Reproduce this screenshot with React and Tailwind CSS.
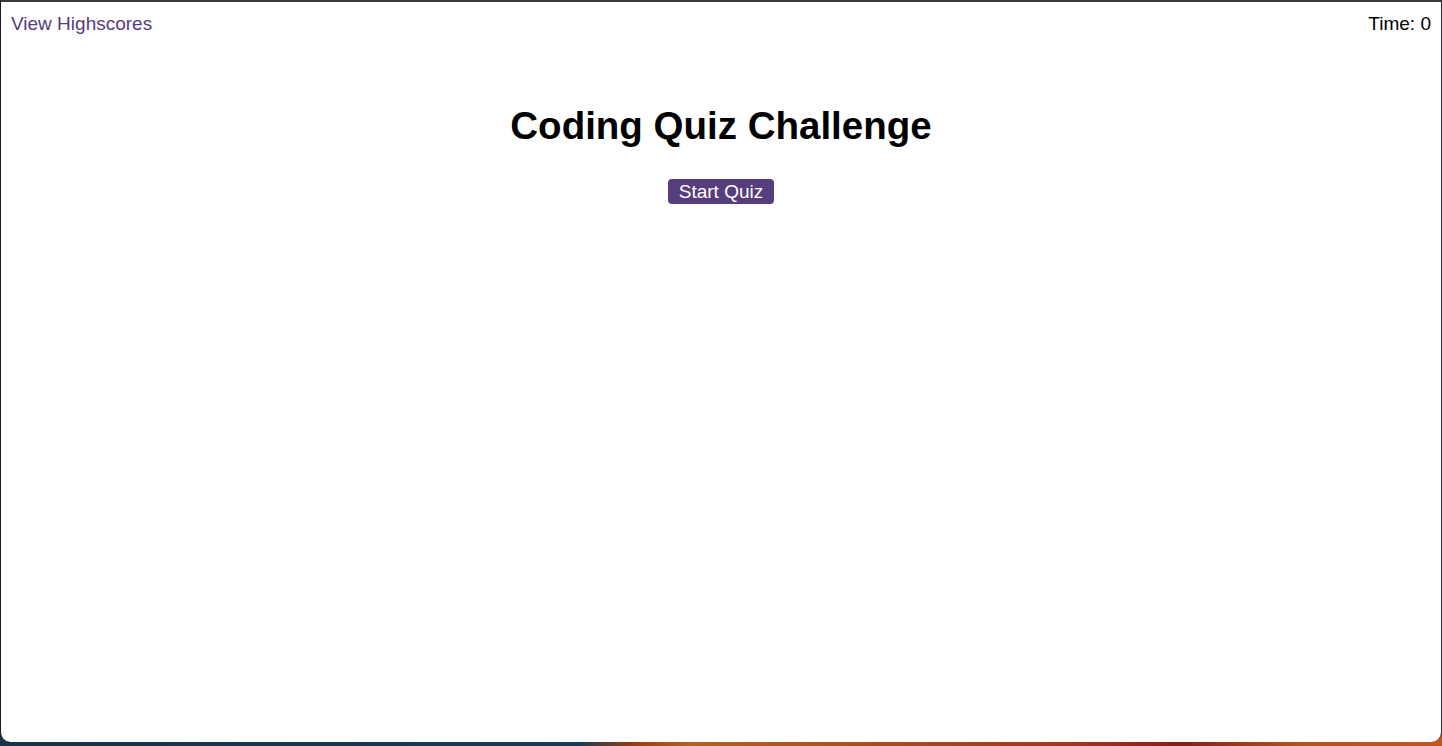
import React, { useState } from "react";

function App() {
  const [time] = useState(0);

  return (
    <div className="h-[746px] w-full flex flex-col bg-[linear-gradient(90deg,#16324c_0%,#123a5c_40%,#9a3e0c_44%,#b4621c_48%,#a3341a_75%,#8a1e10_82%,#b5521a_90%,#c4561c_100%)]">
      <div
        className="h-[742px] bg-white border-t-2 border-t-[#3a3a3a] border-l border-l-[#1a1a1a] border-r border-r-[#1e3550] rounded-b-[10px] flex flex-col"
        style={{ fontFamily: '"Liberation Sans", Arial, sans-serif' }}
      >
        <header className="flex justify-between items-start px-[10px] pt-[12px] text-[19px] leading-[20px]">
          <a href="#" className="text-[#563d7c]">
            View Highscores
          </a>
          <span className="text-black">Time: {time}</span>
        </header>

        <main className="flex flex-col items-center">
          <h1 className="mt-[69px] text-[38.5px] leading-[46px] font-bold text-black">
            Coding Quiz Challenge
          </h1>
          <button className="mt-[30px] h-[25px] px-[11px] bg-[#563d7c] text-white text-[19px] leading-[25px] rounded-[4px]">
            Start Quiz
          </button>
        </main>
      </div>
    </div>
  );
}

export default App;
